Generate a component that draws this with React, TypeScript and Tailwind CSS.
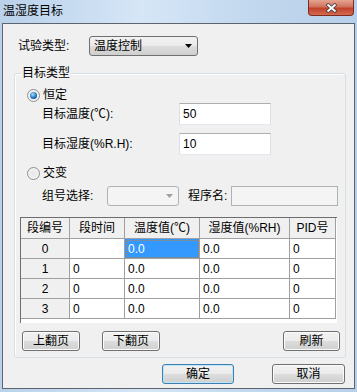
import type { ReactNode } from "react";

const FONT = '"Liberation Sans", "Noto Sans CJK SC", sans-serif';

function Btn({ children, w, primary }: { children: ReactNode; w: string; primary?: boolean }) {
  return (
    <div
      className={`${w} h-[20px] flex items-center justify-center rounded-[3px] border text-[12px] text-black ${
        primary
          ? "border-[#3c7fb1] shadow-[inset_0_0_0_1px_#bfe3f7]"
          : "border-[#707070] shadow-[inset_0_0_0_1px_#fbfbfb]"
      } bg-[linear-gradient(#f2f2f2_0%,#ebebeb_48%,#dddddd_50%,#cfcfcf_100%)]`}
    >
      {children}
    </div>
  );
}

function Radio({ checked }: { checked?: boolean }) {
  return (
    <div className="w-[13px] h-[13px] rounded-full border border-[#8e8f8f] bg-[radial-gradient(circle,#e6e6e6,#f8f8f8)] flex items-center justify-center">
      {checked && (
        <div className="w-[7px] h-[7px] rounded-full bg-[radial-gradient(circle_at_40%_35%,#a6e0ff,#1a6ab8_60%,#0c3f78)]" />
      )}
    </div>
  );
}

function Arrow({ color }: { color: string }) {
  return (
    <svg width="7" height="4" viewBox="0 0 7 4">
      <path d="M0 0H7L3.5 4Z" fill={color} />
    </svg>
  );
}

const cols = ["w-[49px]", "w-[55px]", "w-[75px]", "w-[90px]", "w-[46px]"];
const headers = ["段编号", "段时间", "温度值(℃)", "湿度值(%RH)", "PID号"];
const rows = [
  ["0", "", "0.0", "0.0", "0"],
  ["1", "0", "0.0", "0.0", "0"],
  ["2", "0", "0.0", "0.0", "0"],
  ["3", "0", "0.0", "0.0", "0"],
];

export default function App() {
  return (
    <div
      className="w-[357px] h-[392px] flex flex-col px-[2px] pb-[3px] bg-[linear-gradient(90deg,#b9d1ea,#d6e6f7_40%,#c2d8ee_70%,#b7cfe9)] overflow-hidden"
      style={{ fontFamily: FONT }}
    >
      {/* title bar */}
      <div className="h-[23px] flex items-start justify-between">
        <div className="pl-[1px] pt-[3px] text-[12px] leading-[16px] text-black">温湿度目标</div>
        <div className="mr-[1px] w-[46px] h-[16px] rounded-b-[4px] border border-t-0 border-[#7d2c20] bg-[linear-gradient(#e6a391,#d0735e_45%,#c2412b_55%,#d46b50)] flex items-center justify-center">
          <svg width="11" height="10" viewBox="0 0 11 10">
            <path d="M1 1L10 9M10 1L1 9" stroke="#3a3a3a" strokeWidth="3.4" />
            <path d="M1.5 1.5L9.5 8.5M9.5 1.5L1.5 8.5" stroke="#fff" strokeWidth="2" />
          </svg>
        </div>
      </div>

      {/* client area */}
      <div className="flex-1 border border-[#5c6470] bg-[#f0f0f0] text-[12px] text-black flex flex-col">
        <div className="mt-[12px] ml-[15px] h-[20px] flex items-center">
          <span className="w-[71px]">试验类型:</span>
          <div className="w-[109px] h-[20px] rounded-[3px] border border-[#707070] bg-[linear-gradient(#f2f2f2_0%,#ebebeb_48%,#dddddd_50%,#cfcfcf_100%)] flex items-center justify-between pl-[4px] pr-[5px]">
            <span>温度控制</span>
            <Arrow color="#000" />
          </div>
        </div>

        {/* group box */}
        <div className="relative mt-[17px] ml-[11px] w-[332px] h-[285px] rounded-[3px] border border-[#d5dfe5] shadow-[inset_1px_1px_0_#fff] flex flex-col">
          <span className="absolute left-[6px] -top-[9px] px-[1px] bg-[#f0f0f0] leading-[16px]">目标类型</span>

          <div className="mt-[13px] ml-[12px] h-[16px] flex items-center gap-[3px]">
            <Radio checked />
            <span>恒定</span>
          </div>

          <div className="mt-[0px] ml-[27px] h-[22px] flex items-center">
            <span className="w-[137px]">目标温度(℃):</span>
            <div className="w-[92px] h-[22px] border border-[#abadb3] border-l-[#dbdfe6] border-r-[#dbdfe6] border-b-[#e3e9ef] bg-white pl-[3px] flex items-center">50</div>
          </div>

          <div className="mt-[8px] ml-[27px] h-[22px] flex items-center">
            <span className="w-[137px]">目标湿度(%R.H):</span>
            <div className="w-[92px] h-[22px] border border-[#abadb3] border-l-[#dbdfe6] border-r-[#dbdfe6] border-b-[#e3e9ef] bg-white pl-[3px] flex items-center">10</div>
          </div>

          <div className="mt-[10px] ml-[12px] h-[16px] flex items-center gap-[3px]">
            <Radio />
            <span>交变</span>
          </div>

          <div className="mt-[5px] ml-[27px] h-[20px] flex items-center">
            <span className="w-[65px]">组号选择:</span>
            <div className="w-[72px] h-[20px] rounded-[3px] border border-[#adb2b5] bg-[#f4f4f4] flex items-center justify-end pr-[5px]">
              <Arrow color="#a0a0a0" />
            </div>
            <span className="ml-[9px] w-[43px]">程序名:</span>
            <div className="w-[107px] h-[20px] border border-[#adb2b5] bg-[#f4f4f4]" />
          </div>

          {/* grid */}
          <div className="mt-[11px] ml-[5px] w-[317px] h-[106px] border-l border-t border-[#6d6d6d] bg-white flex flex-col">
            <div className="flex h-[21px]">
              {headers.map((h, i) => (
                <div
                  key={h}
                  className={`${cols[i]} h-[21px] border-r border-b border-[#a0a0a0] bg-[#f0f0f0] flex items-center justify-center whitespace-nowrap`}
                >
                  {h}
                </div>
              ))}
            </div>
            {rows.map((r, ri) => (
              <div key={ri} className="flex h-[20px]">
                {r.map((c, ci) => {
                  const sel = ri === 0 && ci === 2;
                  return (
                    <div
                      key={ci}
                      className={`${cols[ci]} h-[20px] border-r border-b border-[#a0a0a0] flex items-center ${
                        ci === 0 ? "bg-[#f0f0f0] justify-center" : "pl-[3px]"
                      } ${sel ? "bg-[#3399ff] text-white outline-1 outline-dotted outline-[#c08040] -outline-offset-2" : ""}`}
                    >
                      {c}
                    </div>
                  );
                })}
              </div>
            ))}
          </div>

          <div className="mt-[8px] ml-[7px] mr-[5px] flex items-center">
            <Btn w="w-[58px]">上翻页</Btn>
            <div className="ml-[22px]">
              <Btn w="w-[58px]">下翻页</Btn>
            </div>
            <div className="ml-auto">
              <Btn w="w-[57px]">刷新</Btn>
            </div>
          </div>
        </div>

        <div className="mt-[6px] flex items-center">
          <div className="ml-[159px]">
            <Btn w="w-[72px]" primary>
              确定
            </Btn>
          </div>
          <div className="ml-[38px]">
            <Btn w="w-[73px]">取消</Btn>
          </div>
        </div>
      </div>
    </div>
  );
}
